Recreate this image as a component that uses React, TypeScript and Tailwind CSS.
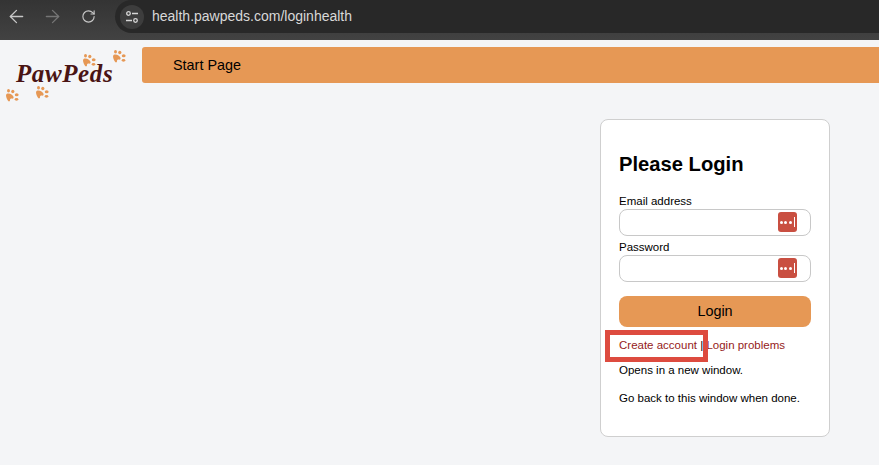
import { ArrowLeft, ArrowRight, RotateCw } from "lucide-react";

function Paw({ className }: { className: string }) {
  return (
    <svg viewBox="0 0 14 14" width="14" height="14" fill="#e69855" className={className}>
      <path d="M1.500 5C4 3.800 7.500 5.200 8.500 7.800c.5 1.500-.7 2.200-2 1.800-1-.3-1.500.5-1.500 1.700 0 1.300-1.300 1.500-2 .4C1.500 9.500.3 6.500 1.500 5z" />
      <ellipse cx="3.500" cy="1.800" rx="1.500" ry="1.700" />
      <ellipse cx="7.800" cy="2.500" rx="1.600" ry="1.700" />
      <ellipse cx="11.700" cy="5.800" rx="1.900" ry="1.500" />
      <ellipse cx="11.500" cy="10.300" rx="1.800" ry="1.400" />
    </svg>
  );
}

function KeyBadge() {
  return (
    <span className="absolute right-[14px] top-[3px] flex h-[20px] w-[19px] items-center justify-center gap-[1.500px] rounded-[3px] bg-[#c94f41]">
      <span className="h-[3px] w-[3px] rounded-full bg-white" />
      <span className="h-[3px] w-[3px] rounded-full bg-white" />
      <span className="h-[3px] w-[3px] rounded-full bg-white" />
      <span className="ml-[1px] h-[10px] w-[1px] bg-white" />
    </span>
  );
}

function Field({ label }: { label: string }) {
  return (
    <div>
      <label className="block text-[11.500px] leading-[15px] text-black">{label}</label>
      <div className="relative">
        <input className="block h-[27px] w-full rounded-[8px] border border-[#c8c8c8] bg-white" />
        <KeyBadge />
      </div>
    </div>
  );
}

export default function App() {
  return (
    <div className="flex h-[465px] w-[879px] flex-col overflow-hidden bg-[#f4f5f7] font-['Liberation_Sans',Arial,sans-serif]">
      <div className="flex h-[40px] items-start bg-linear-to-b from-[#343434] to-[#424242] pl-[6px]">
        <div className="flex h-[33px] items-center gap-[15px]">
          <ArrowLeft size={21} strokeWidth={1.500} className="text-[#c7c7c7]" />
          <ArrowRight size={21} strokeWidth={1.500} className="text-[#757575]" />
          <span className="flex w-[21px] justify-center">
            <RotateCw size={15} strokeWidth={1.800} className="text-[#c7c7c7]" />
          </span>
        </div>
        <div className="ml-[16px] flex h-[33px] flex-1 items-center rounded-l-full bg-[#282828] pl-[5px]">
          <span className="flex h-[24px] w-[24px] items-center justify-center rounded-full bg-[#3d3d3d]">
            <svg viewBox="0 0 14 14" width="14" height="14" fill="none" stroke="#d6d6d6" strokeWidth="1.300">
              <circle cx="3.500" cy="3.500" r="1.800" />
              <path d="M7 3.500h6M1 10.500h6" />
              <circle cx="10.500" cy="10.500" r="1.800" />
            </svg>
          </span>
          <span className="ml-[8px] text-[14px] text-[#d8d8d8]">health.pawpeds.com/loginhealth</span>
        </div>
      </div>

      <div className="flex pt-[7px]">
        <div className="relative h-[60px] w-[142px] shrink-0">
          <span className="absolute left-[16px] top-[13px] font-['Liberation_Serif',serif] text-[25px] font-bold italic leading-[28px] tracking-[0.6px] text-[#4a1414]">
            PawPeds
          </span>
          <Paw className="absolute left-[82px] top-[7px]" />
          <Paw className="absolute left-[112px] top-[3px]" />
          <Paw className="absolute left-[5px] top-[42px]" />
          <Paw className="absolute left-[35px] top-[39px]" />
        </div>
        <div className="flex h-[36px] flex-1 items-center rounded-l-[3px] bg-[#e69855] pl-[31px] pt-[1px] text-[14.400px] text-black">
          Start Page
        </div>
      </div>

      <div className="flex justify-end pr-[49px] pt-[12px]">
        <div className="relative h-[318px] w-[230px] rounded-[8px] border border-[#cfcfcf] bg-white px-[18px] pt-[31px]">
          <h1 className="text-[20.200px] font-bold leading-[26px] text-black">Please Login</h1>
          <div className="mt-[17px] flex flex-col gap-[4px]">
            <Field label="Email address" />
            <Field label="Password" />
          </div>
          <button className="mt-[14px] h-[31px] w-full rounded-[8px] bg-[#e69855] pt-[1px] text-[14.400px] text-black">Login</button>
          <p className="mt-[11px] text-[11.500px] leading-[14px] text-black">
            <a className="text-[#951a1a]">Create account</a> | <a className="text-[#951a1a]">Login problems</a>
          </p>
          <p className="mt-[11px] text-[11.500px] leading-[14px] text-black">Opens in a new window.</p>
          <p className="mt-[14px] text-[11.500px] leading-[14px] text-black">Go back to this window when done.</p>
          <div className="absolute left-[4px] top-[210px] h-[32px] w-[103px] border-[5px] border-[#dd4b3f]" />
        </div>
      </div>
    </div>
  );
}
